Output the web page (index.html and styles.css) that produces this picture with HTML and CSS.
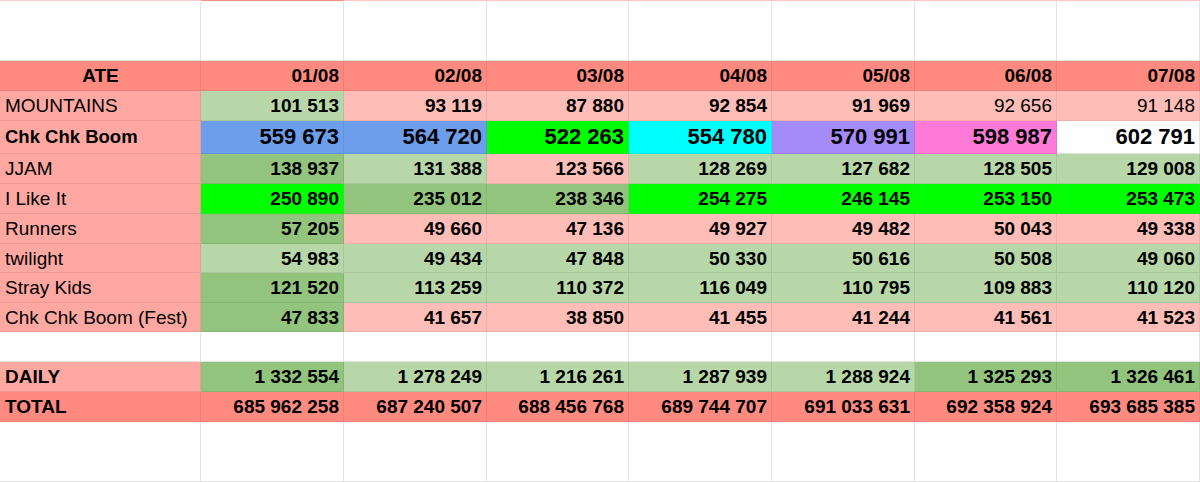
FILE: index.html
```html
<!DOCTYPE html>
<html>
<head>
<meta charset="utf-8">
<link rel="stylesheet" href="styles.css">
</head>
<body>
<div class="sheet">
  <div class="row r-top">
    <div class="cell top-a"></div><div class="cell top-b"></div><div class="cell top-c"></div><div class="cell top-c"></div><div class="cell top-c"></div><div class="cell top-c"></div><div class="cell top-c"></div><div class="cell top-c"></div>
  </div>
  <div class="row r30 bold">
    <div class="cell hdr center">ATE</div>
    <div class="cell hdr">01/08</div><div class="cell hdr">02/08</div><div class="cell hdr">03/08</div><div class="cell hdr">04/08</div><div class="cell hdr">05/08</div><div class="cell hdr">06/08</div><div class="cell hdr">07/08</div>
  </div>
  <div class="row r30">
    <div class="cell label left">MOUNTAINS</div>
    <div class="cell lg b">101 513</div><div class="cell pk b">93 119</div><div class="cell pk b">87 880</div><div class="cell pk b">92 854</div><div class="cell pk b">91 969</div><div class="cell pk">92 656</div><div class="cell pk">91 148</div>
  </div>
  <div class="row r33">
    <div class="cell label left b chk">Chk Chk Boom</div>
    <div class="cell big blue">559 673</div><div class="cell big blue">564 720</div><div class="cell big bright">522 263</div><div class="cell big cyan">554 780</div><div class="cell big purple">570 991</div><div class="cell big magenta">598 987</div><div class="cell big white">602 791</div>
  </div>
  <div class="row r30">
    <div class="cell label left">JJAM</div>
    <div class="cell dg b">138 937</div><div class="cell lg b">131 388</div><div class="cell pk b">123 566</div><div class="cell lg b">128 269</div><div class="cell lg b">127 682</div><div class="cell lg b">128 505</div><div class="cell lg b">129 008</div>
  </div>
  <div class="row r30">
    <div class="cell label left">I Like It</div>
    <div class="cell bright b">250 890</div><div class="cell dg b">235 012</div><div class="cell dg b">238 346</div><div class="cell bright b">254 275</div><div class="cell bright b">246 145</div><div class="cell bright b">253 150</div><div class="cell bright b">253 473</div>
  </div>
  <div class="row r30">
    <div class="cell label left">Runners</div>
    <div class="cell dg b">57 205</div><div class="cell pk b">49 660</div><div class="cell pk b">47 136</div><div class="cell pk b">49 927</div><div class="cell pk b">49 482</div><div class="cell pk b">50 043</div><div class="cell pk b">49 338</div>
  </div>
  <div class="row r29">
    <div class="cell label left">twilight</div>
    <div class="cell lg b">54 983</div><div class="cell lg b">49 434</div><div class="cell lg b">47 848</div><div class="cell lg b">50 330</div><div class="cell lg b">50 616</div><div class="cell lg b">50 508</div><div class="cell lg b">49 060</div>
  </div>
  <div class="row r30">
    <div class="cell label left">Stray Kids</div>
    <div class="cell dg b">121 520</div><div class="cell lg b">113 259</div><div class="cell lg b">110 372</div><div class="cell lg b">116 049</div><div class="cell lg b">110 795</div><div class="cell lg b">109 883</div><div class="cell lg b">110 120</div>
  </div>
  <div class="row r29">
    <div class="cell label left">Chk Chk Boom (Fest)</div>
    <div class="cell dg b">47 833</div><div class="cell pk b">41 657</div><div class="cell pk b">38 850</div><div class="cell pk b">41 455</div><div class="cell pk b">41 244</div><div class="cell pk b">41 561</div><div class="cell pk b">41 523</div>
  </div>
  <div class="row r30">
    <div class="cell"></div><div class="cell"></div><div class="cell"></div><div class="cell"></div><div class="cell"></div><div class="cell"></div><div class="cell"></div><div class="cell"></div>
  </div>
  <div class="row r30">
    <div class="cell label left b">DAILY</div>
    <div class="cell dg b">1 332 554</div><div class="cell lg b">1 278 249</div><div class="cell lg b">1 216 261</div><div class="cell lg b">1 287 939</div><div class="cell lg b">1 288 924</div><div class="cell dg b">1 325 293</div><div class="cell dg b">1 326 461</div>
  </div>
  <div class="row r30 bold">
    <div class="cell hdr left">TOTAL</div>
    <div class="cell hdr">685 962 258</div><div class="cell hdr">687 240 507</div><div class="cell hdr">688 456 768</div><div class="cell hdr">689 744 707</div><div class="cell hdr">691 033 631</div><div class="cell hdr">692 358 924</div><div class="cell hdr">693 685 385</div>
  </div>
  <div class="row r-bottom">
    <div class="cell"></div><div class="cell"></div><div class="cell"></div><div class="cell"></div><div class="cell"></div><div class="cell"></div><div class="cell"></div><div class="cell"></div>
  </div>
</div>
</body>
</html>
```

FILE: styles.css
```css
* { box-sizing: border-box; }
html, body { margin: 0; padding: 0; background: #ffffff; }
body {
  font-family: "Liberation Sans", Arial, sans-serif;
  font-size: 19px;
  color: #000;
  width: 1200px;
  height: 482px;
  overflow: hidden;
}
.sheet { display: flex; flex-direction: column; width: 1200px; }
.row {
  display: grid;
  grid-template-columns: 201px 143px 143px 142px 143px 143px 142px 143px;
}
.r-top { height: 61px; }
.r30 { height: 30px; }
.r29 { height: 29px; }
.r33 { height: 33px; }
.r-bottom { height: 60px; }

.cell {
  display: flex;
  align-items: center;
  justify-content: flex-end;
  padding: 0 4px 0 5px;
  border-right: 1px solid #e2e2e2;
  border-bottom: 1px solid #e2e2e2;
  white-space: nowrap;
  overflow: hidden;
  line-height: 1;
}

.top-a { border-top: 1px solid #f7cdc9; }
.top-b { border-top: 1px solid #ff8a80; }
.top-c { border-top: 1px solid #fcc3bf; }

.left { justify-content: flex-start; }
.center { justify-content: center; }
.bold .cell, .b { font-weight: bold; }
.chk { font-size: 18.5px; }

.hdr { background: #ff8a80; border-color: #ec7f76; }
.label { background: #ffa8a2; border-color: #ec9c96; }
.pk { background: #ffbdb8; border-color: #eeb0ab; }
.lg { background: #b7d7a8; border-color: #a9c79b; }
.dg { background: #93c47d; border-color: #88b574; }
.bright { background: #00ff00; border-color: #1ee81e; }
.blue { background: #6d9eeb; border-color: #6593da; }
.cyan { background: #00ffff; border-color: #16e8e8; }
.purple { background: #a48bf8; border-color: #9881e6; }
.magenta { background: #ff79d9; border-color: #ec70c9; }
.white { background: #ffffff; }

.big { font-size: 22px; font-weight: bold; }
```
